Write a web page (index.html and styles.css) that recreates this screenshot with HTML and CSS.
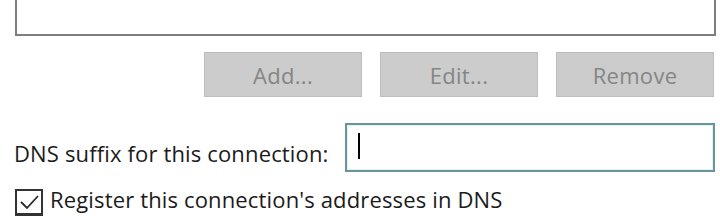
FILE: index.html
```html
<!DOCTYPE html>
<html lang="en">
<head>
    <meta charset="UTF-8">
    <title>DNS settings</title>
    <link rel="stylesheet" href="styles.css">
</head>
<body>
    <div class="listbox"></div>

    <div class="buttons">
        <button class="btn" disabled>Add...</button>
        <button class="btn" disabled>Edit...</button>
        <button class="btn" disabled>Remove</button>
    </div>

    <div class="field">
        <label for="suffix">DNS suffix for this connection:</label>
        <div class="input">
            <span class="caret"></span>
        </div>
    </div>

    <div class="check">
        <span class="box">
            <svg width="23" height="23" viewBox="0 0 23 23">
                <path d="M3 11 L9 17 L20 5" fill="none" stroke="#2a2a2a" stroke-width="1.8"/>
            </svg>
        </span>
        <span class="check-label">Register this connection's addresses in DNS</span>
    </div>
</body>
</html>
```

FILE: styles.css
```css
* {
    box-sizing: border-box;
}

body {
    margin: 0;
    background-color: #fff;
    font-family: "Open Sans", sans-serif;
    font-size: 22px;
    letter-spacing: 0.15px;
    color: #1b1b1b;
    width: 720px;
    height: 216px;
    overflow: hidden;
}

.listbox {
    margin-left: 15px;
    width: 701px;
    height: 36px;
    border: 2px solid #7e7e7e;
    border-top: none;
}

.buttons {
    display: flex;
    justify-content: flex-end;
    gap: 18px;
    margin-top: 16px;
    padding-right: 6px;
}

.btn {
    width: 158px;
    height: 45px;
    background-color: #cccccc;
    border: 1px solid #bdbdbd;
    color: #858585;
    font-family: "Open Sans", sans-serif;
    font-size: 22px;
    letter-spacing: 0.3px;
    padding: 0;
}

.field {
    display: flex;
    align-items: center;
    margin-top: 26px;
    padding-left: 14px;
}

.field label {
    width: 331px;
    padding-top: 10px;
}

.input {
    width: 370px;
    height: 49px;
    border: 2px solid #6a949c;
    box-shadow: inset 0 0 0 1px #dff2f5;
    display: flex;
    align-items: center;
    padding-left: 11px;
}

.caret {
    width: 2px;
    height: 26px;
    margin-top: -4px;
    background-color: #000;
}

.check {
    display: flex;
    align-items: flex-start;
    gap: 7px;
    margin-top: 17px;
    padding-left: 15px;
}

.box {
    width: 28px;
    height: 27px;
    border: 2px solid #333;
    border-bottom-width: 3px;
    display: flex;
    align-items: center;
    justify-content: center;
}

.check-label {
    line-height: 27px;
    margin-top: -3px;
}
```
